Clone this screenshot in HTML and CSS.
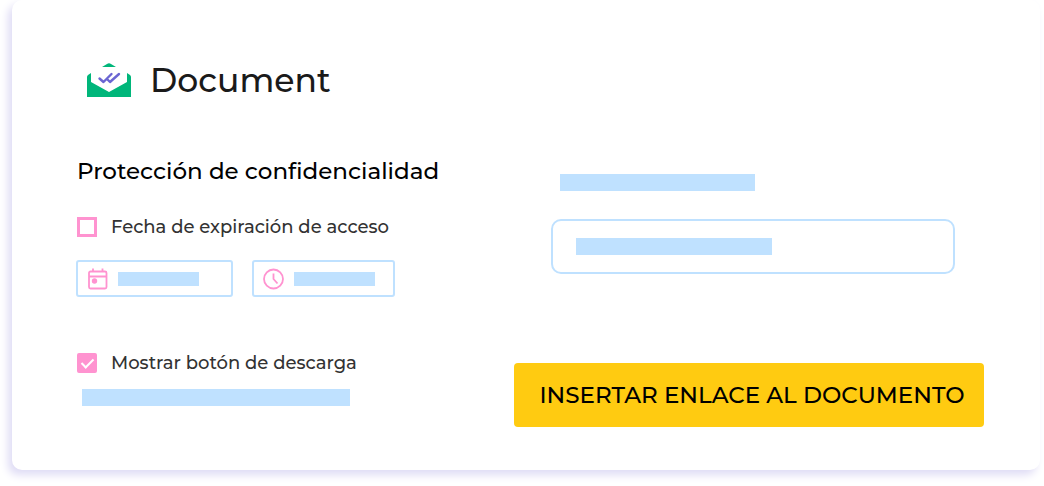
FILE: index.html
```html
<!DOCTYPE html>
<html lang="es">
<head>
<meta charset="utf-8">
<meta name="viewport" content="width=device-width, initial-scale=1">
<title>Document</title>
<link rel="stylesheet" href="styles.css">
</head>
<body>
<main class="card">
  <header class="brand">
    <svg class="brand-icon" viewBox="0 0 44 34" aria-hidden="true">
      <path fill="#00b67a" d="M15 4 L20 1 Q22 -.3 24 1 L29 4 Z"/>
      <path fill="#00b67a" d="M4 10 V19 L22 29 L40 19 V10 L43 12 Q44 13 44 14 V34 H0 V14 Q0 13 1 12 Z"/>
      <path fill="none" stroke="#6b66d2" stroke-width="2.400" stroke-linecap="round" stroke-linejoin="round" d="M12.500 15.500 L16.500 19 L24.500 11 M20.500 16.500 L23 19 L32 11"/>
    </svg>
    <h1 class="brand-name">Document</h1>
  </header>
  <form class="columns">
    <section class="privacy">
      <h2 class="heading">Protección de confidencialidad</h2>
      <label class="option"><input class="check" type="checkbox"><span>Fecha de expiración de acceso</span></label>
      <div class="fields">
        <label class="field field-date">
          <svg class="field-icon" viewBox="0 0 22 22" fill="none" stroke="#ff93d0" stroke-width="1.800" aria-hidden="true">
            <rect x="2" y="3.500" width="17.500" height="17" rx="1.500"/>
            <path d="M2 8.500 H19.500 M6 3.500 V.5 M15.500 3.500 V.5"/>
            <circle cx="7.500" cy="13" r="2.700" fill="#ff93d0" stroke="none"/>
          </svg>
          <input class="field-input" type="text" aria-label="Fecha">
        </label>
        <label class="field field-time">
          <svg class="field-icon" viewBox="0 0 22 22" fill="none" stroke="#ff93d0" stroke-width="1.800" aria-hidden="true">
            <circle cx="10.500" cy="11" r="9.500"/>
            <path d="M10.500 5.500 V11 L14.500 15.500"/>
          </svg>
          <input class="field-input" type="text" aria-label="Hora">
        </label>
      </div>
      <label class="option"><input class="check" type="checkbox" checked><span>Mostrar botón de descarga</span></label>
      <div class="line line-long"></div>
    </section>
    <section class="insert">
      <div class="line line-label"></div>
      <input class="link-input" type="text" aria-label="Enlace">
      <button class="submit" type="button">INSERTAR ENLACE AL DOCUMENTO</button>
    </section>
  </form>
</main>
</body>
</html>
```
FILE: styles.css
```css
* { box-sizing: border-box; }

body {
  margin: 0;
  background: #fff;
  font-family: Montserrat, Inter, "Open Sans", sans-serif;
  color: #333;
}

.card {
  margin: 0 4px 16px 12px;
  padding: 56px 56px 43px 65px;
  border-radius: 10px;
  background: #fff;
  box-shadow: -4px 5px 8px #dfdcf5;
}

.brand {
  display: flex;
  align-items: center;
  gap: 19px;
  padding-left: 10px;
}

.brand-icon {
  width: 44px;
  height: 34px;
}

.brand-name {
  margin: 0;
  font-size: 33px;
  font-weight: 500;
  line-height: 48px;
  color: #1a1a1a;
}

.columns {
  display: grid;
  grid-template-columns: minmax(0, 1fr) minmax(0, 470px);
  gap: 24px;
  padding-top: 52px;
}

.heading {
  margin: 0;
  font-size: 23px;
  font-weight: 500;
  line-height: 30px;
  color: #000;
}

.option {
  display: flex;
  align-items: center;
  gap: 14px;
  font-size: 18px;
  font-weight: 500;
  line-height: 24px;
}

.heading + .option { margin-top: 29px; }

.check {
  appearance: none;
  display: grid;
  place-items: center;
  width: 20px;
  height: 20px;
  margin: 0;
  border: 3px solid #ff93d0;
}

.check:checked {
  border-radius: 2px;
  background: #ff93d0;
}

.check:checked::before {
  content: "";
  width: 5px;
  height: 10px;
  border: solid #fff;
  border-width: 0 2px 2px 0;
  transform: translateY(-1px) rotate(45deg);
}

.fields {
  display: flex;
  gap: 19px;
  margin: 21px 0 54px -1px;
}

.field {
  display: flex;
  align-items: center;
  gap: 9px;
  height: 37px;
  padding-left: 9px;
  border: 2px solid #bfe1ff;
  border-radius: 3px;
}

.field-date { width: 157px; }
.field-time { width: 143px; }

.field-icon {
  flex: none;
  width: 22px;
  height: 22px;
}

.field-input {
  flex: 1;
  min-width: 0;
  height: 14px;
  padding: 0;
  border: 0;
  background: linear-gradient(#bfe1ff, #bfe1ff) 0 0 / 81px 14px no-repeat;
}

.line {
  height: 17px;
  background: #bfe1ff;
}

.line-long {
  width: 268px;
  margin: 14px 0 0 5px;
}

.insert {
  display: flex;
  flex-direction: column;
  padding-top: 18px;
}

.line-label {
  width: 195px;
  margin-left: 46px;
}

.link-input {
  height: 55px;
  margin: 28px 29px 0 37px;
  border: 2px solid #bfe1ff;
  border-radius: 10px;
  background: linear-gradient(#bfe1ff, #bfe1ff) 23px 50% / 196px 17px no-repeat;
}

.submit {
  height: 64px;
  margin-top: 89px;
  padding: 0 0 0 6px;
  border: 0;
  border-radius: 4px;
  background: #ffcb11;
  font: inherit;
  font-size: 23px;
  font-weight: 500;
  color: #000;
}
```
